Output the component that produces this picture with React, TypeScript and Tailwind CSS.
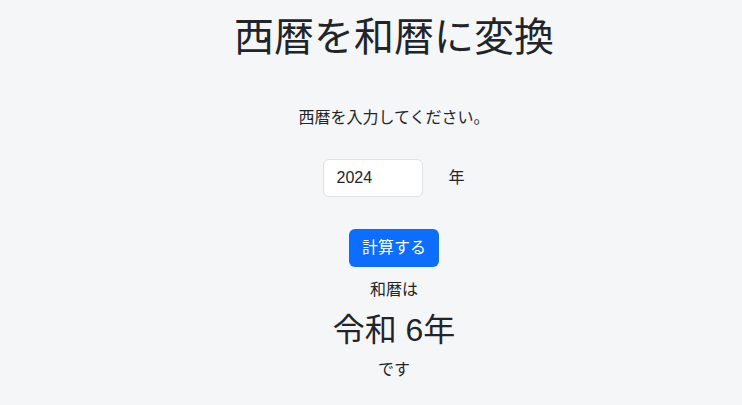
import React, { useState } from 'react';

const font = { fontFamily: '"Liberation Sans", "Noto Sans CJK JP", sans-serif' };

export default function App() {
  const [year, setYear] = useState('2024');
  const [result, setResult] = useState('令和 6年');

  const convert = () => {
    const y = parseInt(year, 10);
    if (isNaN(y)) return;
    if (y >= 2019) setResult(`令和 ${y - 2018}年`);
    else if (y >= 1989) setResult(`平成 ${y - 1988}年`);
    else if (y >= 1926) setResult(`昭和 ${y - 1925}年`);
    else setResult('不明');
  };

  return (
    <div
      className="min-h-screen w-full bg-[#f5f6f8] text-[#212529] pl-[46px] text-center"
      style={font}
    >
      <h1 className="pt-[13px] text-[40px] leading-[48px] font-normal">西暦を和暦に変換</h1>

      <p className="mt-[45px] text-[16px] leading-[24px]">西暦を入力してください。</p>

      <div className="mt-[29px] flex items-center justify-center gap-[25px]">
        <input
          type="text"
          value={year}
          onChange={(e) => setYear(e.target.value)}
          className="w-[100px] h-[38px] rounded-[6px] border border-[#dee2e6] bg-white px-[12px] text-[16px] text-[#212529] outline-none"
          style={font}
        />
        <span className="text-[16px] leading-[24px]">年</span>
      </div>

      <button
        type="button"
        onClick={convert}
        className="mt-[32px] h-[38px] w-[90px] rounded-[6px] bg-[#0d6efd] text-[16px] text-white"
        style={font}
      >
        計算する
      </button>

      <p className="mt-[11px] text-[16px] leading-[24px]">和暦は</p>
      <p className="mt-[9px] text-[32px] leading-[38px]">{result}</p>
      <p className="mt-[9px] text-[16px] leading-[24px]">です</p>
    </div>
  );
}
